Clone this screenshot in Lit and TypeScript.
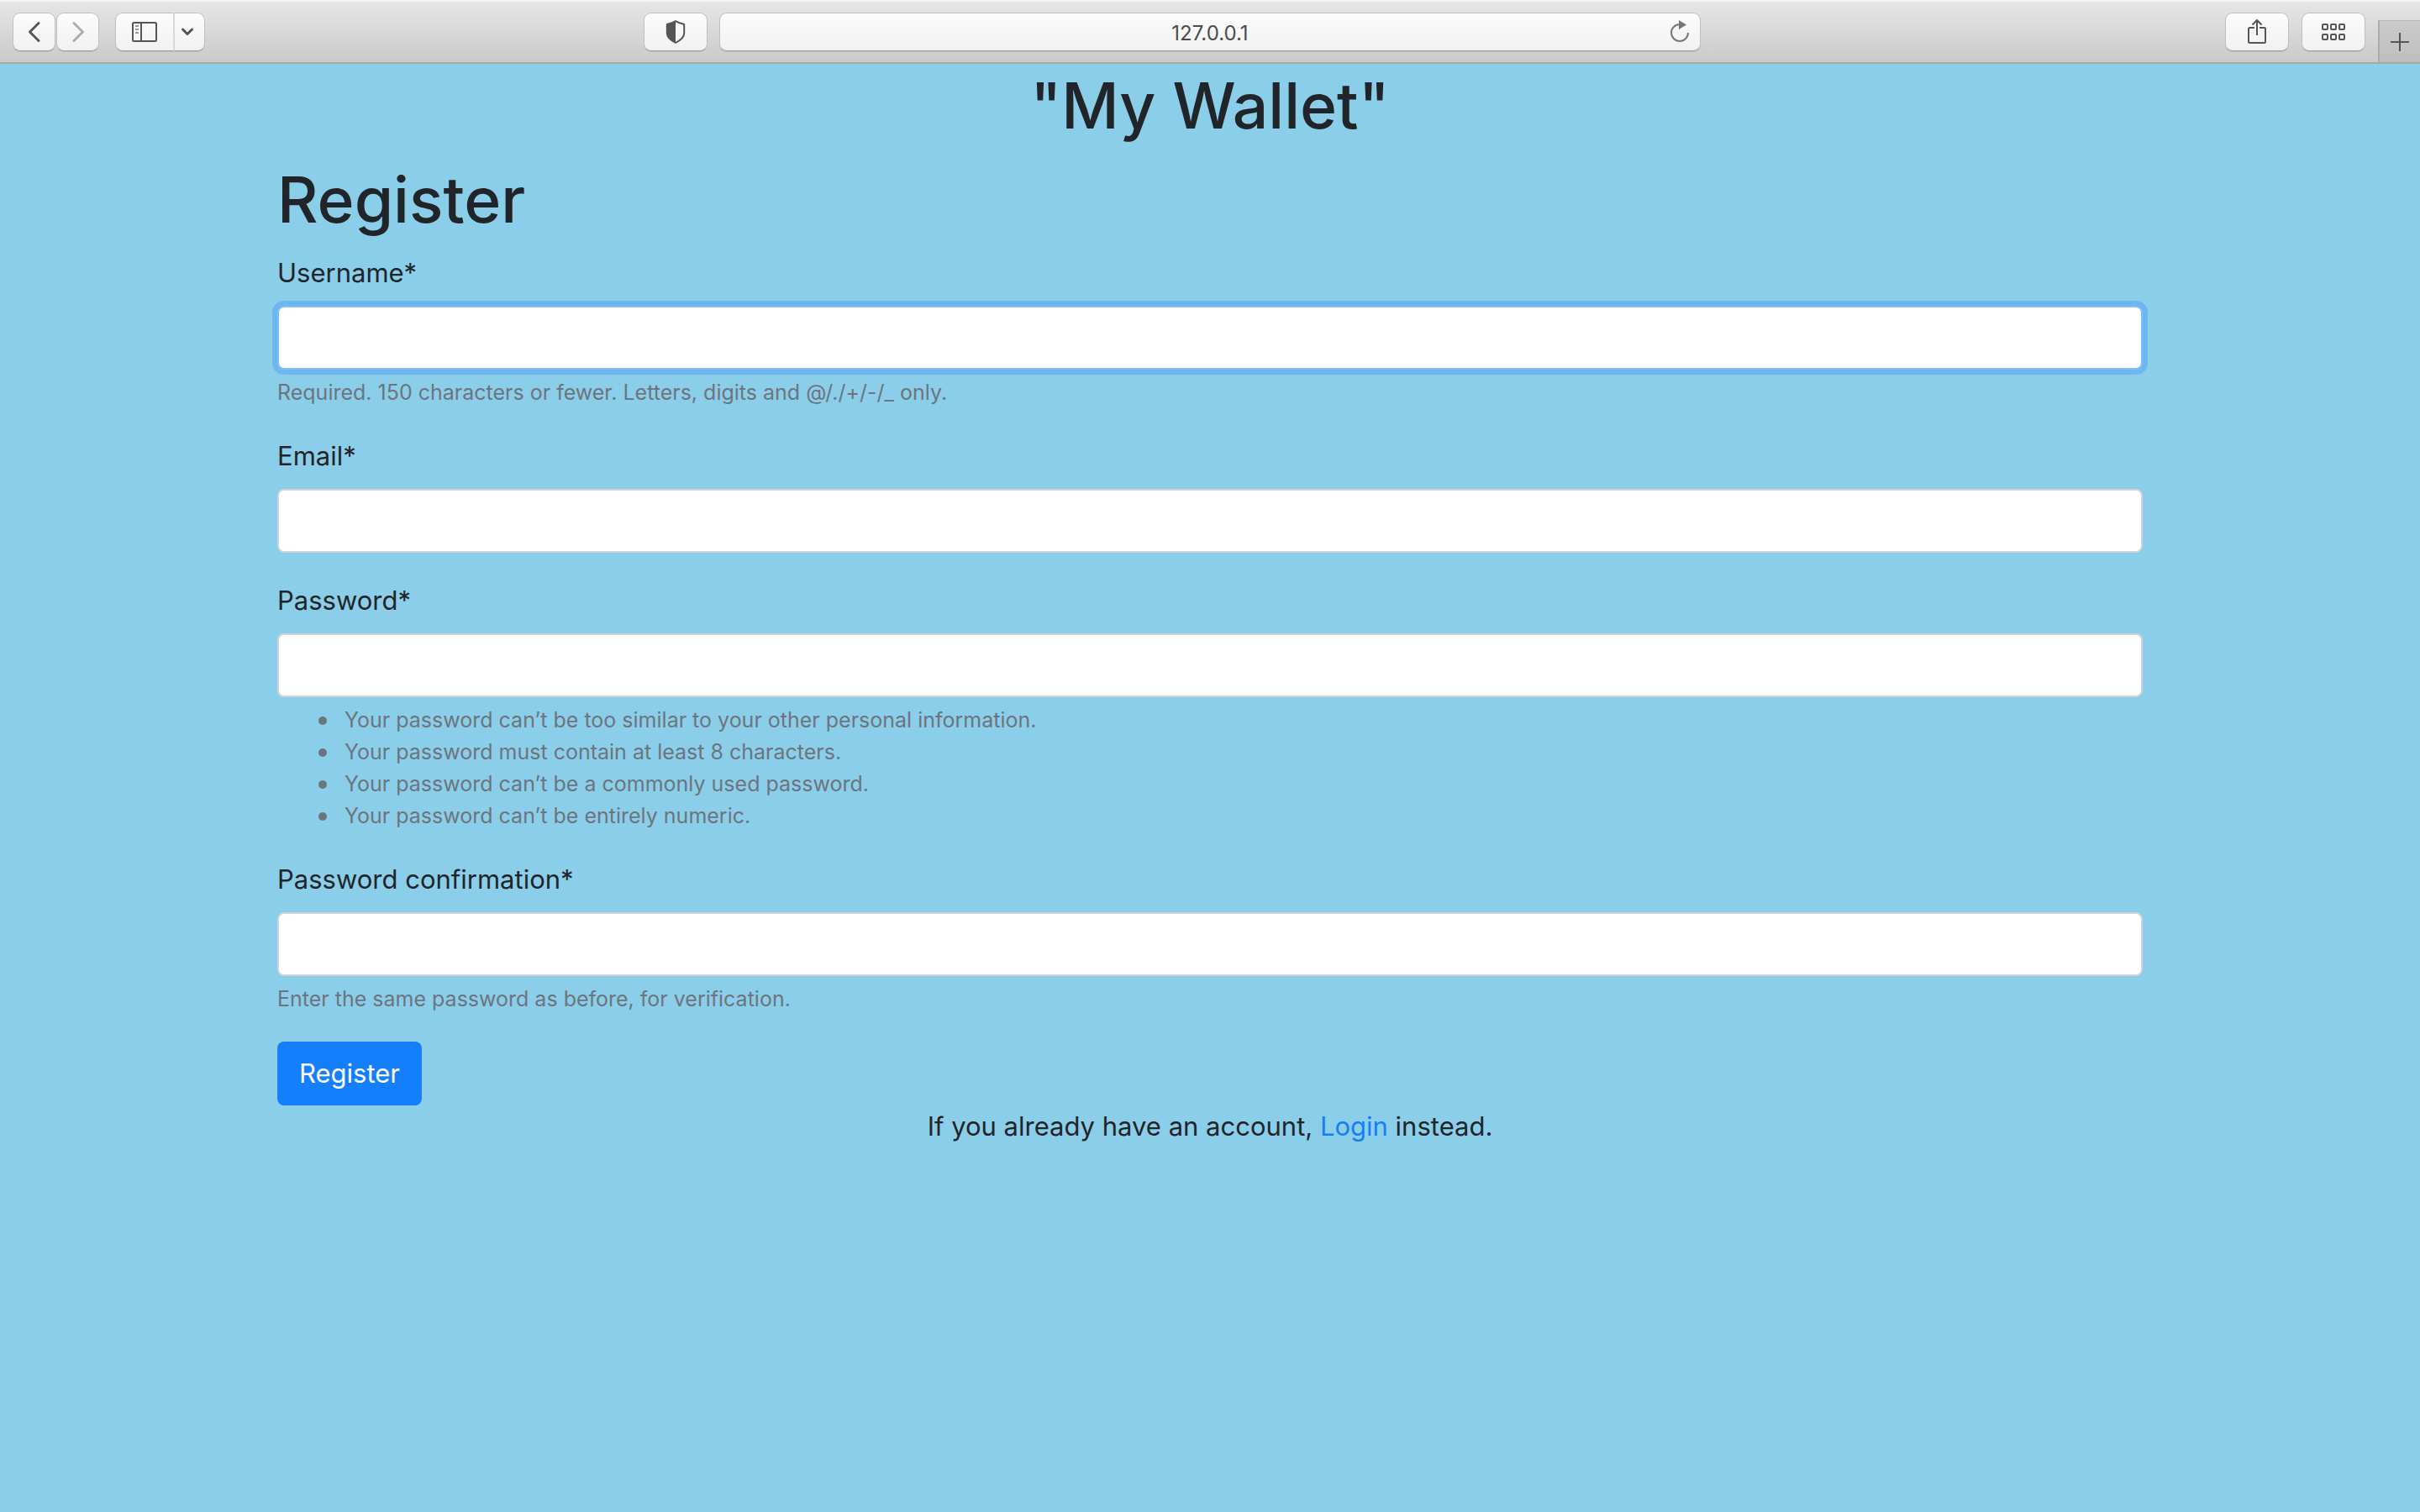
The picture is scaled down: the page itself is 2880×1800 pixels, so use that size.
import { LitElement, html, svg, css, nothing } from "lit";
import { customElement, property } from "lit/decorators.js";

const gridCell = (x: number, y: number) =>
  svg`<rect x=${x} y=${y} width="6" height="6" rx="1" />`;

@customElement("browser-bar")
class BrowserBar extends LitElement {
  @property() address = "";

  static styles = css`
    :host {
      display: block;
    }
    .bar {
      box-sizing: border-box;
      display: grid;
      grid-template-columns: 107fr 146fr 107fr;
      height: 76px;
      padding-top: 13px;
      border-top: 2px solid #f3f3f3;
      border-bottom: 2px solid #a8a8a8;
      background: linear-gradient(#e6e6e6, #cacaca);
    }
    .left,
    .right {
      display: flex;
      align-items: flex-start;
    }
    .left {
      justify-content: space-between;
      padding: 0 14px 0 15px;
    }
    .right {
      justify-content: flex-end;
      gap: 15px;
    }
    .nav,
    .split {
      display: flex;
    }
    .nav {
      gap: 1px;
    }
    .split {
      margin-left: 18px;
    }
    button,
    .address {
      box-sizing: border-box;
      height: 46px;
      border: 1px solid #c0c0c0;
      border-bottom-color: #9c9c9c;
      border-radius: 9px;
      background: linear-gradient(#fcfcfc, #f1f1f1);
      box-shadow: 0 1px 0 #bdbdbd;
    }
    button {
      display: flex;
      align-items: center;
      justify-content: center;
      width: 51px;
      padding: 0;
    }
    button.wide {
      width: 76px;
    }
    .split .side {
      width: 69px;
      border-right: 0;
      border-radius: 9px 0 0 9px;
    }
    .split .more {
      width: 38px;
      padding-right: 6px;
      border-left: 2px solid #d8d8d8;
      border-radius: 0 9px 9px 0;
    }
    .address {
      display: grid;
      grid-template-columns: 48px 1fr 48px;
      align-items: center;
    }
    .address input {
      grid-column: 2;
      min-width: 0;
      padding: 3px 0 0;
      border: 0;
      outline: 0;
      background: none;
      color: #4b4b4b;
      font: 400 24px/32px Inter, "Liberation Sans", sans-serif;
      text-align: center;
    }
    .address button {
      width: 48px;
      height: 40px;
      border: 0;
      background: none;
      box-shadow: none;
    }
    .right .add {
      align-self: flex-end;
      width: 50px;
      height: 50px;
      border: 0;
      border-top: 1px solid #b4b4b4;
      border-left: 2px solid #acacac;
      border-radius: 0;
      background: linear-gradient(#cbcbcb, #bebebe);
      box-shadow: none;
    }
    svg {
      display: block;
      fill: none;
    }
  `;

  render() {
    return html`
      <header class="bar">
        <div class="left">
          <div class="nav">
            <button aria-label="Back">
              <svg width="20" height="28" viewBox="0 0 20 28" stroke="#555" stroke-width="3" stroke-linecap="round" stroke-linejoin="round">
                <path d="M15 3.500 4.500 14 15 24.500" />
              </svg>
            </button>
            <button aria-label="Forward">
              <svg width="20" height="28" viewBox="0 0 20 28" stroke="#acacac" stroke-width="3" stroke-linecap="round" stroke-linejoin="round">
                <path d="M5 3.500 15.500 14 5 24.500" />
              </svg>
            </button>
            <div class="split">
              <button class="side" aria-label="Sidebar">
                <svg width="30" height="24" viewBox="0 0 30 24" stroke="#555" stroke-width="2">
                  <rect x="1" y="1" width="28" height="22" rx="1.500" />
                  <path d="M11 1v22" />
                  <path d="M4 5h4M4 9h4M4 13h4" stroke="#999" />
                </svg>
              </button>
              <button class="more" aria-label="Sidebar options">
                <svg width="16" height="10" viewBox="0 0 16 10" stroke="#555" stroke-width="3" stroke-linecap="round" stroke-linejoin="round">
                  <path d="M2.500 2 8 7.500 13.500 2" />
                </svg>
              </button>
            </div>
          </div>
          <button class="wide" aria-label="Privacy report">
            <svg width="24" height="28" viewBox="0 0 24 28">
              <path d="M12 1.200C9 3 5.500 4.300 1.800 5v10.500c0 5 5 8.800 10.200 11.300 5.200-2.500 10.200-6.300 10.200-11.300V5C18.500 4.300 15 3 12 1.200Z" stroke="#555" stroke-width="2" stroke-linejoin="round" />
              <path d="M12 1.200C9 3 5.500 4.300 1.800 5v10.500c0 5 5 8.800 10.200 11.300Z" fill="#555" />
            </svg>
          </button>
        </div>
        <div class="address">
          <input type="text" aria-label="Address" .value=${this.address} />
          <button aria-label="Reload">
            <svg width="24" height="28" viewBox="0 0 24 28">
              <path d="M12 5A10 10 0 1 0 22 15" stroke="#777" stroke-width="2" />
              <path d="M11 0v11l9-5.500Z" fill="#777" />
            </svg>
          </button>
        </div>
        <div class="right">
          <button class="wide" aria-label="Share">
            <svg width="22" height="32" viewBox="0 0 22 32" stroke="#555" stroke-width="2">
              <path d="M8 11H2.500Q1 11 1 12.500v15Q1 29 2.500 29h17q1.500 0 1.500-1.500v-15Q21 11 19.500 11H14" />
              <path d="M11 20V2M5.500 7.500 11 2l5.500 5.500" stroke-linejoin="round" />
            </svg>
          </button>
          <button class="wide" aria-label="Tab overview">
            <svg width="28" height="20" viewBox="0 0 28 20" stroke="#555" stroke-width="2">
              ${[1, 11, 21].map((x) => [1, 13].map((y) => gridCell(x, y)))}
            </svg>
          </button>
          <button class="add" aria-label="New tab">
            <svg width="22" height="22" viewBox="0 0 22 22" stroke="#555" stroke-width="2">
              <path d="M11 0v22M0 11h22" />
            </svg>
          </button>
        </div>
      </header>
    `;
  }
}

interface Field {
  id: string;
  label: string;
  type: string;
  focused?: boolean;
  help?: string;
  rules?: string[];
}

const FIELDS: Field[] = [
  {
    id: "username",
    label: "Username*",
    type: "text",
    focused: true,
    help: "Required. 150 characters or fewer. Letters, digits and @/./+/-/_ only.",
  },
  { id: "email", label: "Email*", type: "email" },
  {
    id: "password1",
    label: "Password*",
    type: "password",
    rules: [
      "Your password can’t be too similar to your other personal information.",
      "Your password must contain at least 8 characters.",
      "Your password can’t be a commonly used password.",
      "Your password can’t be entirely numeric.",
    ],
  },
  {
    id: "password2",
    label: "Password confirmation*",
    type: "password",
    help: "Enter the same password as before, for verification.",
  },
];

@customElement("app-root")
class AppRoot extends LitElement {
  static styles = css`
    :host {
      display: block;
      min-height: 100vh;
      background: #8bceea;
      color: #212529;
      font: 400 31px/50px Inter, "Liberation Sans", sans-serif;
    }
    .container {
      box-sizing: border-box;
      max-width: 2280px;
      margin: 0 auto;
      padding: 0 30px;
    }
    h1 {
      margin: 0 0 12px;
      font-size: 75px;
      font-weight: 500;
      line-height: 100px;
    }
    .brand,
    .switch {
      text-align: center;
    }
    .group {
      margin-bottom: 32px;
    }
    label {
      display: block;
      margin-bottom: 14px;
    }
    .control {
      display: block;
      box-sizing: border-box;
      width: 100%;
      height: 76px;
      padding: 12px 24px;
      border: 2px solid #ced4da;
      border-radius: 8px;
      outline: 0;
      background: #fff;
      color: #495057;
      font: inherit;
    }
    .control.focused,
    .control:focus {
      border-color: #80bdff;
      box-shadow: 0 0 0 6px #6cb8ee;
    }
    .help {
      margin: 8px 0 0;
      color: #6c757d;
      font-size: 25px;
      line-height: 38px;
    }
    ul.help {
      padding-left: 49px;
      list-style: none;
    }
    .help li {
      display: flex;
      align-items: center;
    }
    .help li::before {
      content: "";
      width: 10px;
      height: 10px;
      margin: 2px 21px 0 0;
      border-radius: 50%;
      background: currentColor;
    }
    .submit {
      display: block;
      height: 76px;
      padding: 0 26px;
      border: 0;
      border-radius: 8px;
      background: #157efb;
      color: #fff;
      font: inherit;
    }
    .switch {
      margin: 0;
    }
    a {
      color: #157efb;
      text-decoration: none;
    }
  `;

  renderField(f: Field) {
    return html`
      <div class="group">
        <label for=${f.id}>${f.label}</label>
        <input class="control ${f.focused ? "focused" : ""}" id=${f.id} type=${f.type} />
        ${f.help ? html`<p class="help">${f.help}</p>` : nothing}
        ${f.rules ? html`<ul class="help">${f.rules.map((r) => html`<li>${r}</li>`)}</ul>` : nothing}
      </div>
    `;
  }

  render() {
    return html`
      <browser-bar address="127.0.0.1"></browser-bar>
      <main class="container">
        <h1 class="brand">"My Wallet"</h1>
        <h1>Register</h1>
        <form @submit=${(e: Event) => e.preventDefault()}>
          ${FIELDS.map((f) => this.renderField(f))}
          <button class="submit" type="submit">Register</button>
        </form>
        <p class="switch">If you already have an account, <a href="#login">Login</a> instead.</p>
      </main>
    `;
  }
}
